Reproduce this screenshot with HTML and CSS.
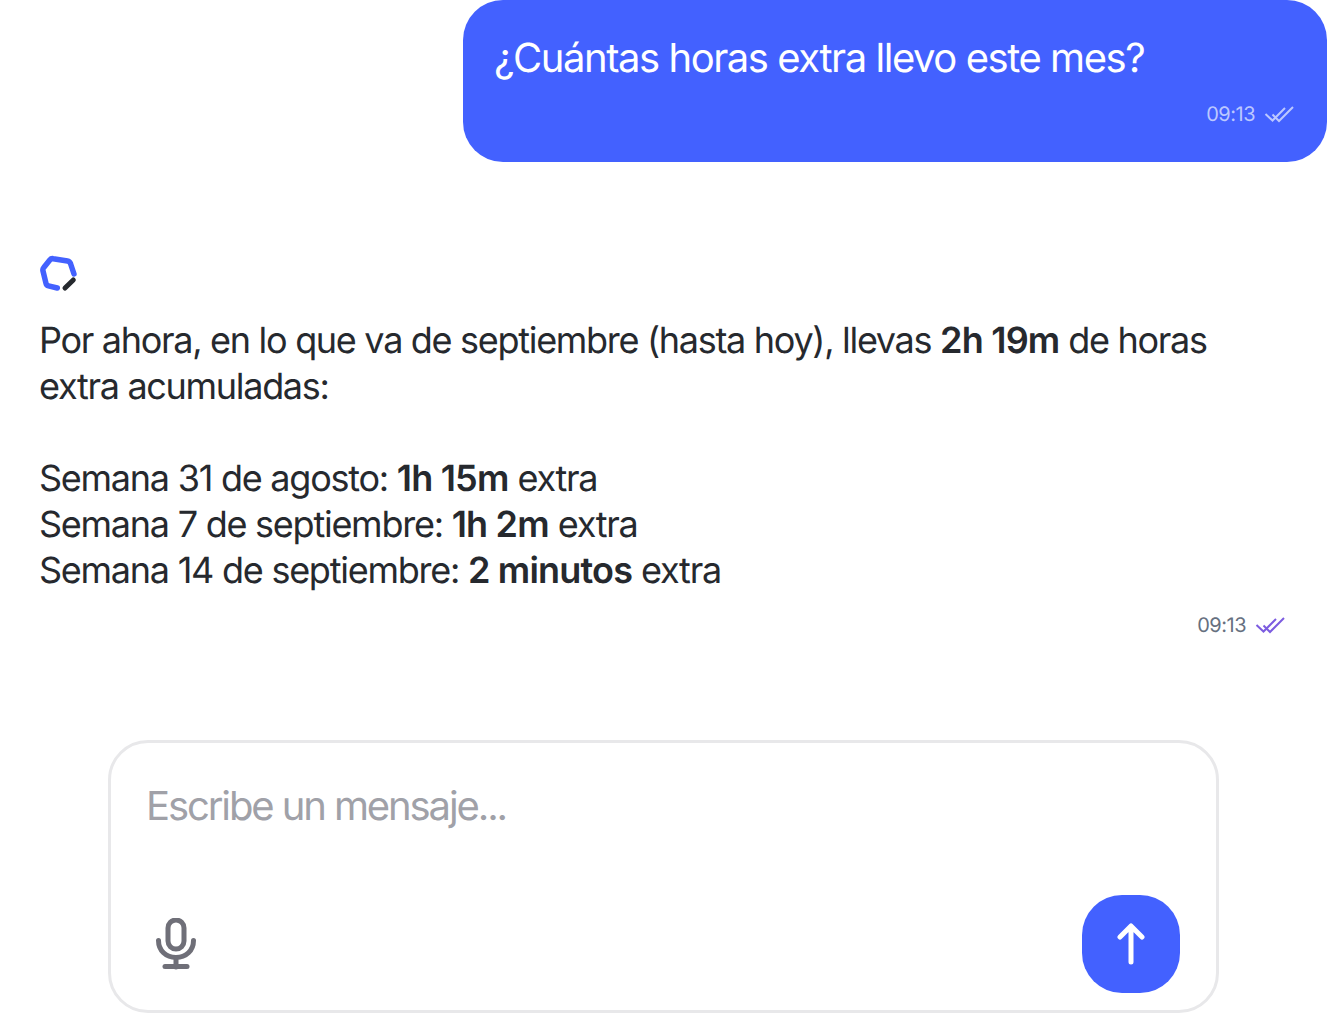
FILE: index.html
```html
<!DOCTYPE html>
<html lang="es">
<head>
<meta charset="utf-8">
<title>Chat</title>
<link rel="stylesheet" href="styles.css">
</head>
<body>
<main class="chat">
  <section class="user-row">
    <div class="bubble">
      <p class="bubble-text">¿Cuántas horas extra llevo este mes?</p>
      <div class="meta meta-user">
        <span>09:13</span>
        <svg class="check" viewBox="0 0 30 18" width="30" height="18"><path d="M1.500 9l7 6.500L21 3M8.500 9.500l6.500 6.500L29 2" fill="none" stroke="currentColor" stroke-width="2"/></svg>
      </div>
    </div>
  </section>
  <section class="bot">
    <svg class="logo" viewBox="0 0 38 38" width="38" height="38">
      <path d="M18.300 34L9.500 31.800Q7.500 31.300 7 29.300L4 17Q3.500 15 4.800 13.500L10.800 6Q12.200 4.300 14.200 4.700L28.500 7Q30.700 7.400 31.500 9.500L35 20" fill="none" stroke="#4361ff" stroke-width="5.500" stroke-linecap="round" stroke-linejoin="round"/>
      <path d="M26 34l8.300-8" fill="none" stroke="#26292e" stroke-width="5" stroke-linecap="round"/>
    </svg>
    <div class="answer">
      <p>Por ahora, en lo que va de septiembre (hasta hoy), llevas <b>2h 19m</b> de horas extra acumuladas:</p>
      <ul class="weeks">
        <li>Semana 31 de agosto: <b>1h 15m</b> extra</li>
        <li>Semana 7 de septiembre: <b>1h 2m</b> extra</li>
        <li>Semana 14 de septiembre: <b>2 minutos</b> extra</li>
      </ul>
    </div>
    <div class="meta meta-bot">
      <span>09:13</span>
      <svg class="check" viewBox="0 0 30 18" width="30" height="18"><path d="M1.500 9l7 6.500L21 3M8.500 9.500l6.500 6.500L29 2" fill="none" stroke="currentColor" stroke-width="2"/></svg>
    </div>
  </section>
  <section class="composer">
    <div class="placeholder">Escribe un mensaje...</div>
    <div class="tools">
      <svg class="mic" viewBox="0 0 40 52" width="40" height="52">
        <rect x="12" y="2" width="16" height="29" rx="8" fill="none" stroke="#6f6f78" stroke-width="5"/>
        <path d="M2.500 22.500c0 10 7.500 17 17.500 17s17.500-7 17.500-17M20 40v9" fill="none" stroke="#6f6f78" stroke-width="5" stroke-linecap="round"/>
        <path d="M9 48.500h22" fill="none" stroke="#6f6f78" stroke-width="5" stroke-linecap="round"/>
      </svg>
      <button class="send" type="button" aria-label="Enviar">
        <svg viewBox="0 0 28 42" width="28" height="42"><path d="M14 39V3M3 14L14 3l11 11" fill="none" stroke="#fff" stroke-width="5" stroke-linecap="round" stroke-linejoin="round"/></svg>
      </button>
    </div>
  </section>
</main>
</body>
</html>
```
FILE: styles.css
```css
* { box-sizing: border-box; }
html, body { margin: 0; background: #fff; }
body {
  width: 1327px;
  height: 1013px;
  overflow: hidden;
  font-family: Inter, "Liberation Sans", sans-serif;
  color: #26292e;
  text-rendering: geometricPrecision;
}
p { margin: 0; }
.chat { display: flex; flex-direction: column; }
.user-row { display: flex; justify-content: flex-end; }
.bubble {
  width: 864px;
  height: 162px;
  padding: 35px 33px 0 31px;
  background: #4361ff;
  border-radius: 40px;
  color: #fff;
}
.bubble-text { font-size: 40px; line-height: 46px; letter-spacing: -1.45px; }
.meta {
  display: flex;
  justify-content: flex-end;
  align-items: center;
  gap: 9px;
  font-size: 20px;
  line-height: 24px;
  letter-spacing: -0.5px;
}
.meta-user { margin-top: 21px; color: #bcc8ff; }
.meta-bot { margin: 20px 42px 0 0; color: #667080; }
.meta-bot .check { color: #7c5ce0; }
.bot { margin-top: 92px; padding-left: 39px; display: flex; flex-direction: column; }
.logo { display: block; margin-bottom: 25px; }
.answer { font-size: 36px; line-height: 46px; letter-spacing: -1.3px; width: 1200px; }
.answer b { font-weight: 600; letter-spacing: -0.8px; }
.weeks { list-style: none; margin: 46px 0 0; padding: 0; letter-spacing: -1.25px; }
.composer {
  margin: 103px 0 0 108px;
  width: 1111px;
  height: 273px;
  border: 3px solid #e8e8ea;
  border-radius: 40px;
  padding: 40px 36px 0 35px;
  display: flex;
  flex-direction: column;
}
.placeholder { font-size: 40px; line-height: 46px; letter-spacing: -2.1px; color: #a0a1a8; }
.tools { display: flex; justify-content: space-between; align-items: center; margin-top: 66px; padding-left: 10px; }
.mic { display: block; }
.send {
  width: 98px;
  height: 98px;
  border: 0;
  padding: 0;
  border-radius: 40px;
  background: #4361ff;
  display: flex;
  align-items: center;
  justify-content: center;
}
```
